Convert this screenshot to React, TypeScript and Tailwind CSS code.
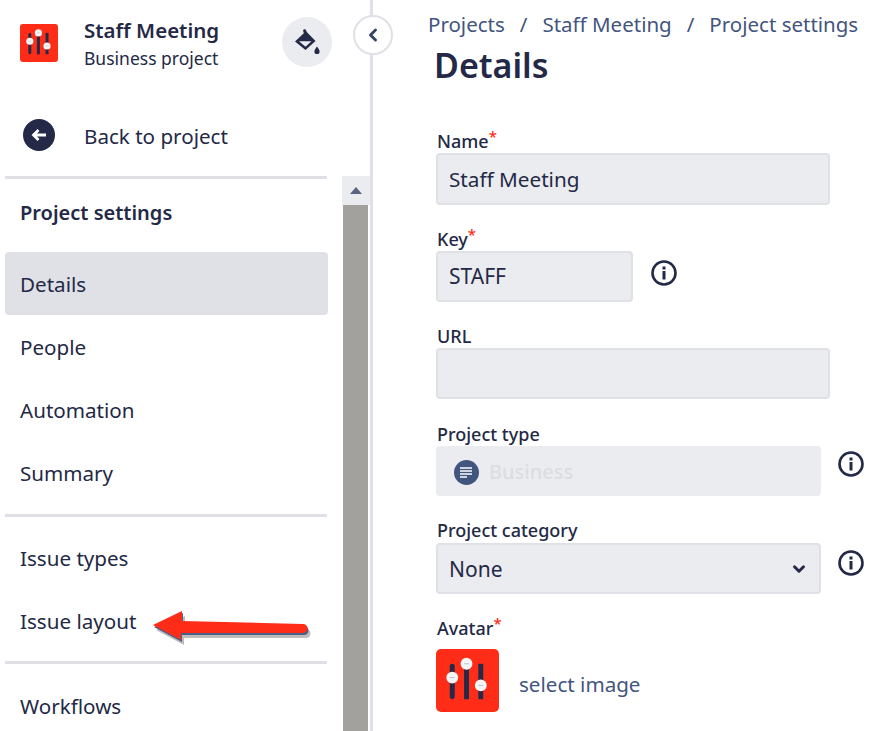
import { ChevronDown, ChevronLeft } from 'lucide-react';

const font = "[font-family:'Noto_Sans',sans-serif]";

// Sliders logo, drawn in a 64 unit box so it works at both sizes
function ProjectAvatar({ className }: { className: string }) {
  return (
    <svg viewBox="0 0 64 64" className={className}>
      <rect width="64" height="64" rx="5" fill="#ff2d17" />
      <rect x="14" y="15" width="5" height="36" rx="2.5" fill="#232946" />
      <rect x="28.500" y="10" width="5" height="41" fill="#232946" />
      <rect x="43" y="15" width="5" height="36" fill="#232946" />
      <circle cx="16.500" cy="29" r="6" fill="#f4f5f7" />
      <circle cx="31" cy="15" r="6" fill="#f4f5f7" />
      <circle cx="45.500" cy="37" r="6" fill="#f4f5f7" />
      <path d="M14 29h5M28.500 15h5M43 37h5" stroke="#c1c4cc" strokeWidth="1" />
    </svg>
  );
}

function InfoIcon({ className }: { className?: string }) {
  return (
    <svg viewBox="0 0 26 26" className={`w-[26px] h-[26px] ${className ?? ''}`}>
      <circle cx="13" cy="13" r="11.500" fill="none" stroke="#232946" strokeWidth="2.600" />
      <rect x="11.500" y="6.500" width="3" height="3" fill="#232946" />
      <rect x="11.500" y="11" width="3" height="8.500" fill="#232946" />
    </svg>
  );
}

function NavItem({ label, active }: { label: string; active?: boolean }) {
  return (
    <div className={`h-[63px] w-[323px] flex items-center pl-[15px] pt-[1px] rounded-[4px] text-[20.6px] text-[#232946] ${active ? 'bg-[#dfe1e6]' : ''}`}>
      {label}
    </div>
  );
}

function Divider() {
  return <div className="h-[3px] bg-[#dfe1e6] w-[322px]" />;
}

function FieldLabel({ label, required }: { label: string; required?: boolean }) {
  return (
    <div className="h-[21px] pl-[1px] flex items-end text-[18px] leading-[21px] font-medium text-[#232946]">
      {label}
      {required && <span className="text-[#ff2d17] text-[15px] leading-[15px] self-start -mt-[2px]">*</span>}
    </div>
  );
}

export default function App() {
  return (
    <div className={`w-[870px] h-[731px] overflow-hidden bg-white flex relative ${font}`}>
      {/* Sidebar */}
      <aside className="w-[373px] h-full shrink-0 border-r-[3px] border-[#dfe1e6] flex flex-col">
        <div className="h-[176px] shrink-0 flex flex-col">
          <div className="flex items-start pt-[17px] pl-[20px] pr-[38px]">
            <ProjectAvatar className="w-[38px] h-[38px] mt-[7px]" />
            <div className="ml-[26px] flex-1 -mt-[1px]">
              <div className="text-[20.500px] leading-[28px] font-semibold text-[#232946]">Staff Meeting</div>
              <div className="text-[17.500px] leading-[25px] mt-[2px] text-[#232946]">Business project</div>
            </div>
            <div className="w-[50px] h-[50px] rounded-full bg-[#ebecf0] flex items-center justify-center">
              <svg viewBox="0 0 26 26" className="w-[26px] h-[26px]">
                <path d="M9 1l2.200-1L13 3.200 21.500 12 11.500 21 1 12.500 9.800 4.200z" fill="#232946" />
                <path d="M5 12.200h12.500l-6 5.500z" fill="#ebecf0" />
                <path d="M23 17.500c1.500 2.200 2.600 3.500 2.600 5a2.600 2.600 0 0 1-5.200 0c0-1.500 1.100-2.800 2.600-5z" fill="#232946" />
              </svg>
            </div>
          </div>
          <div className="flex items-center pl-[23px] mt-[48px]">
            <div className="w-[32px] h-[32px] rounded-full bg-[#232946] flex items-center justify-center">
              <svg viewBox="0 0 18 18" className="w-[18px] h-[18px]">
                <path d="M16 9H4M8.500 4L3.500 9l5 5" fill="none" stroke="#fff" strokeWidth="2.800" />
              </svg>
            </div>
            <span className="ml-[29px] mt-[2px] text-[20.600px] text-[#232946]">Back to project</span>
          </div>
        </div>

        <div className="flex-1 flex min-h-0">
          <nav className="w-[342px] pl-[5px] shrink-0 overflow-hidden">
            <Divider />
            <div className="h-[73px] flex items-center pl-[15px] pb-[6px] text-[20px] font-semibold text-[#232946]">Project settings</div>
            <NavItem label="Details" active />
            <NavItem label="People" />
            <NavItem label="Automation" />
            <NavItem label="Summary" />
            <div className="mt-[10px]"><Divider /></div>
            <div className="mt-[9px]">
              <NavItem label="Issue types" />
              <NavItem label="Issue layout" />
            </div>
            <div className="mt-[9px]"><Divider /></div>
            <div className="mt-[10px]"><NavItem label="Workflows" /></div>
          </nav>
          <div className="w-[28px] shrink-0 flex flex-col">
            <div className="h-[29px] bg-[#ebecf0] flex items-center justify-center">
              <div className="w-0 h-0 border-x-[6px] border-x-transparent border-b-[7px] border-b-[#5a6480]" />
            </div>
            <div className="flex-1 mx-[1px] mr-[2px] bg-[#a3a19e]" />
          </div>
        </div>
      </aside>

      {/* Main column */}
      <main className="flex-1 pl-[55px]">
        <div className="h-[50px] flex items-end text-[20.500px] leading-[28px] text-[#42557f] whitespace-nowrap pb-[12px]">
          <span>Projects</span>
          <span className="mx-[15px]">/</span>
          <span>Staff Meeting</span>
          <span className="mx-[15px]">/</span>
          <span>Project settings</span>
        </div>
        <h1 className="ml-[6px] text-[34px] leading-[30px] font-semibold text-[#232946]">Details</h1>

        <div className="ml-[8px]">
          <div className="mt-[51px]"><FieldLabel label="Name" required /></div>
          <div className="mt-[1px] w-[394px] h-[52px] rounded-[4px] border-2 border-[#dfe1e6] bg-[#ebecf0] flex items-center pl-[11px] pt-[1px] text-[20.700px] text-[#232946]">
            Staff Meeting
          </div>

          <div className="mt-[24px]"><FieldLabel label="Key" required /></div>
          <div className="mt-[1px] flex items-center">
            <div className="w-[197px] h-[51px] rounded-[4px] border-2 border-[#dfe1e6] bg-[#ebecf0] flex items-center pl-[11px] text-[21px] text-[#232946]">
              STAFF
            </div>
            <InfoIcon className="ml-[18px] -mt-[7px]" />
          </div>

          <div className="mt-[24px]"><FieldLabel label="URL" /></div>
          <div className="mt-[1px] w-[394px] h-[51px] rounded-[4px] border-2 border-[#dfe1e6] bg-[#ebecf0]" />

          <div className="mt-[25px]"><FieldLabel label="Project type" /></div>
          <div className="mt-[1px] flex items-center">
            <div className="w-[385px] h-[50px] rounded-[4px] bg-[#ebecf0] flex items-center pl-[18px]">
              <div className="w-[25px] h-[25px] mt-[2px] rounded-full bg-[#42557f] flex items-center justify-center">
                <svg viewBox="0 0 13 11" className="w-[13px] h-[11px]">
                  <path d="M0 1h12M0 4h12M0 7h12M0 10h7" stroke="#fff" strokeWidth="1.600" />
                </svg>
              </div>
              <span className="ml-[10px] pt-[1px] text-[20px] font-medium text-[#dcdde2]">Business</span>
            </div>
            <InfoIcon className="ml-[17px] -mt-[14px]" />
          </div>

          <div className="mt-[24px]"><FieldLabel label="Project category" /></div>
          <div className="mt-[2px] flex items-center">
            <div className="w-[385px] h-[51px] rounded-[4px] border-2 border-[#dfe1e6] bg-[#ebecf0] flex items-center justify-between pl-[11px] pr-[11px] text-[21px] text-[#232946]">
              <span className="pt-[2px]">None</span>
              <ChevronDown size={18} strokeWidth={4} color="#232946" />
            </div>
            <InfoIcon className="ml-[17px] -mt-[12px]" />
          </div>

          <div className="mt-[24px]"><FieldLabel label="Avatar" required /></div>
          <div className="mt-[10px] flex items-center">
            <ProjectAvatar className="w-[63px] h-[63px]" />
            <span className="ml-[20px] pt-[8px] text-[20.600px] text-[#42557f]">select image</span>
          </div>
        </div>
      </main>

      {/* Collapse button sits over the sidebar edge */}
      <div className="absolute left-[353px] top-[15px] w-[40px] h-[40px] rounded-full bg-white border-2 border-[#dfe1e6] flex items-center justify-center">
        <ChevronLeft size={20} strokeWidth={3.500} color="#344563" />
      </div>

      {/* Red annotation arrow */}
      <svg viewBox="0 0 170 44" className="absolute left-[148px] top-[606px] w-[170px] h-[44px]">
        <g transform="translate(5 5)">
          <path d="M0 14L29 0V10L150 13a4.500 4.500 0 0 1 0 9L28 22V29z" fill="#a3a19e" opacity="0.7" transform="translate(3 5)" />
          <path d="M0 14L29 0V10L150 13a4.500 4.500 0 0 1 0 9L28 22V29z" fill="#4a5f8a" transform="translate(1 2)" />
          <path d="M0 14L29 0V10L150 13a4.500 4.500 0 0 1 0 9L28 22V29z" fill="#ff2d17" />
        </g>
      </svg>
    </div>
  );
}
